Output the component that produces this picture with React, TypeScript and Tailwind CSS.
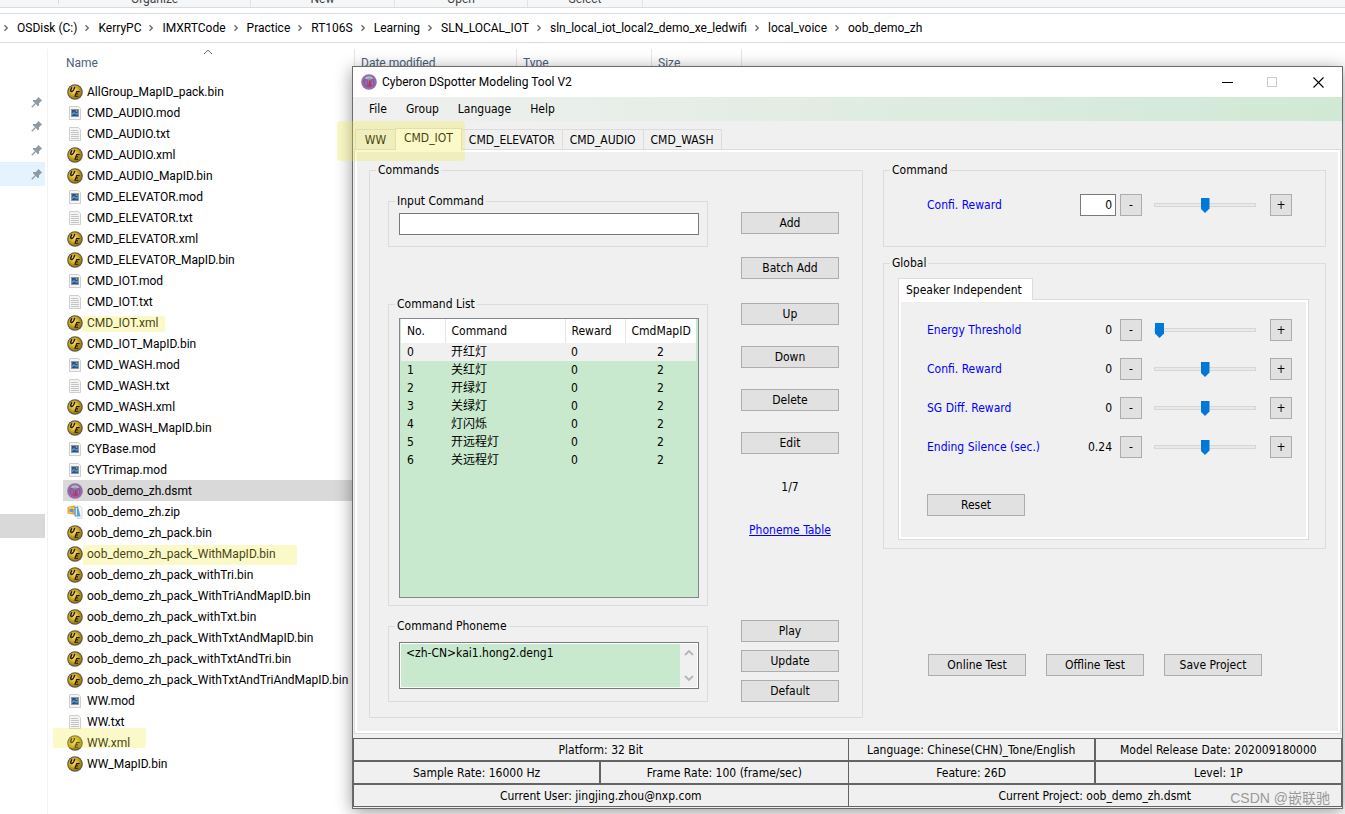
import React, { useState } from "react";

type FileKind = "ue" | "mod" | "txt" | "dsmt" | "zip";

const files: { name: string; kind: FileKind; mark?: string }[] = [
  { name: "AllGroup_MapID_pack.bin", kind: "ue" },
  { name: "CMD_AUDIO.mod", kind: "mod" },
  { name: "CMD_AUDIO.txt", kind: "txt" },
  { name: "CMD_AUDIO.xml", kind: "ue" },
  { name: "CMD_AUDIO_MapID.bin", kind: "ue" },
  { name: "CMD_ELEVATOR.mod", kind: "mod" },
  { name: "CMD_ELEVATOR.txt", kind: "txt" },
  { name: "CMD_ELEVATOR.xml", kind: "ue" },
  { name: "CMD_ELEVATOR_MapID.bin", kind: "ue" },
  { name: "CMD_IOT.mod", kind: "mod" },
  { name: "CMD_IOT.txt", kind: "txt" },
  { name: "CMD_IOT.xml", kind: "ue", mark: "left-4 w-[82px] top-1 h-4" },
  { name: "CMD_IOT_MapID.bin", kind: "ue" },
  { name: "CMD_WASH.mod", kind: "mod" },
  { name: "CMD_WASH.txt", kind: "txt" },
  { name: "CMD_WASH.xml", kind: "ue" },
  { name: "CMD_WASH_MapID.bin", kind: "ue" },
  { name: "CYBase.mod", kind: "mod" },
  { name: "CYTrimap.mod", kind: "mod" },
  { name: "oob_demo_zh.dsmt", kind: "dsmt" },
  { name: "oob_demo_zh.zip", kind: "zip" },
  { name: "oob_demo_zh_pack.bin", kind: "ue" },
  { name: "oob_demo_zh_pack_WithMapID.bin", kind: "ue", mark: "left-4 w-[214px] top-0.5 h-5" },
  { name: "oob_demo_zh_pack_withTri.bin", kind: "ue" },
  { name: "oob_demo_zh_pack_WithTriAndMapID.bin", kind: "ue" },
  { name: "oob_demo_zh_pack_withTxt.bin", kind: "ue" },
  { name: "oob_demo_zh_pack_WithTxtAndMapID.bin", kind: "ue" },
  { name: "oob_demo_zh_pack_withTxtAndTri.bin", kind: "ue" },
  { name: "oob_demo_zh_pack_WithTxtAndTriAndMapID.bin", kind: "ue" },
  { name: "WW.mod", kind: "mod" },
  { name: "WW.txt", kind: "txt" },
  { name: "WW.xml", kind: "ue", mark: "-left-3.5 w-[93px] -top-1 h-5" },
  { name: "WW_MapID.bin", kind: "ue" },
];

const crumbs = [
  "OSDisk (C:)",
  "KerryPC",
  "IMXRTCode",
  "Practice",
  "RT106S",
  "Learning",
  "SLN_LOCAL_IOT",
  "sln_local_iot_local2_demo_xe_ledwifi",
  "local_voice",
  "oob_demo_zh",
];

const commands = ["开红灯", "关红灯", "开绿灯", "关绿灯", "灯闪烁", "开远程灯", "关远程灯"];

const tabs = ["WW", "CMD_IOT", "CMD_ELEVATOR", "CMD_AUDIO", "CMD_WASH"];

const DsmtIcon = () => (
  <svg className="w-4 h-4 shrink-0" viewBox="0 0 16 16">
    <circle cx="8" cy="8" r="7.8" fill="#9a68a6" />
    <circle cx="8" cy="8" r="5.4" fill="#86559a" />
    <path d="M3.6 4.6 Q5 2 8 2.2 Q11 2 12.4 4.6 L10.6 5.2 H5.4z" fill="#a9bcc4" />
    <path d="M6.6 4.5h3l-.4 5h-2z" fill="#8296a4" />
    <path d="M7.6 6.5h1.8l-.2 6.4H8z" fill="#d8263f" />
    <path d="M5 6.4v4.4M11.3 6.4v4.4" stroke="#b583bd" strokeWidth="0.9" />
  </svg>
);

const FileIcon = ({ kind }: { kind: FileKind }) => {
  if (kind === "dsmt") return <DsmtIcon />;
  if (kind === "ue") {
    return (
      <svg className="w-4 h-4 shrink-0" viewBox="0 0 16 16">
        <defs>
          <radialGradient id="gold" cx="0.42" cy="0.4" r="0.62">
            <stop offset="0" stopColor="#f3e08a" />
            <stop offset="0.5" stopColor="#d3ae22" />
            <stop offset="1" stopColor="#8b6e12" />
          </radialGradient>
        </defs>
        <circle cx="8" cy="8" r="7.8" fill="#57554c" />
        <circle cx="8" cy="8" r="6.8" fill="url(#gold)" />
        <path d="M4.8 3.2 L3.7 6.2 Q3.5 7.6 4.7 7.5 Q6 7.4 6.6 6 L7.8 3" fill="none" stroke="#1b1708" strokeWidth="1.3" />
        <path d="M12.6 7.6 H9.6 L8 12.2 H11.2 M8.8 9.9 H11.2" fill="none" stroke="#1b1708" strokeWidth="1.1" />
      </svg>
    );
  }
  if (kind === "zip") {
    return (
      <svg className="w-4 h-4 shrink-0" viewBox="0 0 16 16">
        <path d="M10 2h3l2 2v10.5h-5z" fill="#f4f7fa" stroke="#ccd5dd" strokeWidth="0.8" />
        <path d="M0.5 3 L8.5 1.2 V11 L0.5 9.6z" fill="#f3a32f" />
        <path d="M2 4.2h5M2 8.2h3" stroke="#ffe3a6" strokeWidth="0.9" />
        <circle cx="4.6" cy="6.4" r="1.9" fill="#4c9fd6" />
        <path d="M7.5 3.2 L11 2.6 L13.6 12.4 L7.5 12.6z" fill="#59a5d8" />
        <path d="M9.4 4v7.6" stroke="#d5ebf8" strokeWidth="1.2" />
      </svg>
    );
  }
  return (
    <svg className="w-4 h-4 shrink-0" viewBox="0 0 16 16">
      <path d="M2.5 1.5h9l2 2v11h-11z" fill="#f4f4f4" stroke="#cfcfcf" />
      {kind === "txt" ? (
        <path d="M4 4.5h7M4 6.5h8M4 8.5h8M4 10.5h8M4 12.5h8" stroke="#c0c0c0" strokeWidth="0.9" />
      ) : (
        <>
          <rect x="4.5" y="4.5" width="7" height="7" fill="#2f5480" stroke="#8393a5" strokeWidth="0.8" />
          <path d="M5.2 9.8 Q6.5 6.8 8 8.4 T11 8" stroke="#5e9bd6" strokeWidth="1.3" fill="none" />
          <rect x="8.8" y="5.4" width="1.6" height="1.4" fill="#c9b458" />
        </>
      )}
    </svg>
  );
};

const PinIcon = () => (
  <svg className="w-3 h-3" viewBox="0 0 12 12">
    <path d="M7.2 0.8 L11.2 4.8 L9.8 5.4 L8 7.2 L8 9.6 L7 10.2 L1.8 5 L2.4 4 L4.8 4 L6.6 2.2z" fill="#8d99a3" />
    <path d="M4.6 7.4 L0.8 11.2" stroke="#8d99a3" strokeWidth="1.3" />
  </svg>
);

const Crumb = ({ label }: { label: string }) => (
  <>
    <svg className="w-[21px] h-2 shrink-0" viewBox="0 0 21 8">
      <path d="M8.5 1.2 L11.3 4 L8.5 6.8" fill="none" stroke="#666" strokeWidth="1.3" />
    </svg>
    <a href="#" className="whitespace-nowrap">{label}</a>
  </>
);

const Button = ({ children, className = "" }: { children: React.ReactNode; className?: string }) => (
  <button className={`w-[98px] h-[22px] shrink-0 bg-[#e1e1e1] border border-[#adadad] leading-5 ${className}`}>
    {children}
  </button>
);

const Group = ({ title, className = "", children }: { title: string; className?: string; children: React.ReactNode }) => (
  <fieldset className="min-w-0 border border-[#dcdcdc]">
    <legend className="ml-1.5 px-0.5 leading-4">{title}</legend>
    <div className={className}>{children}</div>
  </fieldset>
);

const SliderRow = ({ id, label, value, max = 100, start, boxed }: {
  id: string;
  label: string;
  value: string;
  max?: number;
  start: number;
  boxed?: boolean;
}) => {
  const [pos, setPos] = useState(start);
  return (
    <div className="flex items-center h-[22px]">
      <label htmlFor={id} className="flex-1 text-[#0000ff] whitespace-nowrap">{label}</label>
      {boxed ? (
        <input
          aria-label={`${label} value`}
          defaultValue={value}
          className="w-9 h-[22px] mr-1 pr-[3px] bg-white border border-[#7a7a7a] text-right"
        />
      ) : (
        <output htmlFor={id} className="mr-2">{value}</output>
      )}
      <button onClick={() => setPos(pos - 1)} className="w-[22px] h-[22px] bg-[#e1e1e1] border border-[#adadad] leading-5">-</button>
      <input
        id={id}
        type="range"
        min={0}
        max={max}
        value={pos}
        onChange={(e) => setPos(Number(e.target.value))}
        className="w-[102px] h-[15px] ml-3 mr-3.5 appearance-none bg-transparent [&::-webkit-slider-runnable-track]:h-1 [&::-webkit-slider-runnable-track]:bg-[#e7eaea] [&::-webkit-slider-runnable-track]:border [&::-webkit-slider-runnable-track]:border-[#d6d6d6] [&::-webkit-slider-thumb]:appearance-none [&::-webkit-slider-thumb]:w-[9px] [&::-webkit-slider-thumb]:h-[15px] [&::-webkit-slider-thumb]:-mt-1.5 [&::-webkit-slider-thumb]:bg-[#0078d7] [&::-webkit-slider-thumb]:[clip-path:polygon(0_0,100%_0,100%_70%,50%_100%,0_70%)]"
      />
      <button onClick={() => setPos(pos + 1)} className="w-[22px] h-[22px] bg-[#e1e1e1] border border-[#adadad] leading-5">+</button>
    </div>
  );
};

const Explorer = () => (
  <div className="flex-1 flex flex-col font-[Roboto,'Noto_Sans',sans-serif] text-xs leading-4 text-black">
    <div className="flex items-end h-2 overflow-hidden bg-[#f5f6f7] border-b border-[#dadbdc] text-center text-[#444]">
      <span className="w-[59px] h-1 mb-[3px] border-r border-[#dadbdc]" />
      <span className="w-[191px]">Organize</span>
      <span className="w-[145px] border-x border-[#e2e3e4]">New</span>
      <span className="w-[133px] border-r border-[#e2e3e4]">Open</span>
      <span className="w-[115px] border-r border-[#e2e3e4]">Select</span>
    </div>
    <nav className="flex items-center h-[30px] mt-[5px] -ml-1 border-y border-[#d9d9d9]">
      {crumbs.map((c) => (
        <Crumb key={c} label={c} />
      ))}
    </nav>
    <div className="flex-1 flex">
      <aside className="w-[48px] shrink-0 border-r border-[#f3f3f3] mt-1.5">
        <div className="pt-[41px] w-[45px]">
          {[0, 1, 2, 3].map((n) => (
            <div key={n} className={`flex items-center justify-end h-6 pr-0.5 ${n === 3 ? "bg-[#e5f3ff]" : ""}`}>
              <PinIcon />
            </div>
          ))}
          <div className="h-6 mt-[328px] bg-[#d9d9d9]" />
        </div>
      </aside>
      <main className="flex-1 min-w-0">
        <div className="flex h-[38px] pt-1.5 text-[#4c607a]">
          <button className="relative w-[307px] shrink-0 pl-[18px] pt-1 text-left border-r border-[#e5e5e5] h-6">
            Name
            <svg className="absolute left-[155px] top-0 w-2.5 h-1.5" viewBox="0 0 10 6">
              <path d="M1 5 L5 1.2 L9 5" fill="none" stroke="#666" />
            </svg>
          </button>
          <span className="w-[162px] pl-1.5 pt-1.5 h-6 border-r border-[#e5e5e5]">Date modified</span>
          <span className="w-[135px] pl-1.5 pt-1.5 h-6 border-r border-[#e5e5e5]">Type</span>
          <span className="w-[90px] pl-1.5 pt-1.5 h-6 border-r border-[#e5e5e5]">Size</span>
        </div>
        <ul className="ml-[15px] w-[678px]">
          {files.map((f) => (
            <li key={f.name} className={`flex items-center h-[21px] pl-1 ${f.kind === "dsmt" ? "bg-[#d9d9d9]" : ""}`}>
              <div className="relative flex items-center gap-1 h-full">
                <FileIcon kind={f.kind} />
                <span className="whitespace-nowrap">{f.name}</span>
                {f.mark && <span className={`absolute bg-[#f5e93c]/28 rounded-xs ${f.mark}`} />}
              </div>
            </li>
          ))}
        </ul>
      </main>
    </div>
  </div>
);

const CommandTable = () => (
  <div className="h-[280px] bg-[#c8e9cd] border border-[#828790] pl-px pr-0.5">
    <table className="w-full table-fixed border-collapse text-left">
      <thead>
        <tr className="h-6 bg-white">
          <th className="w-11 pl-1.5 font-normal border-r border-[#e5e5e5]">No.</th>
          <th className="pl-1.5 font-normal border-r border-[#e5e5e5]">Command</th>
          <th className="w-[60px] pl-1.5 font-normal border-r border-[#e5e5e5]">Reward</th>
          <th className="w-[71px] pl-1.5 font-normal">CmdMapID</th>
        </tr>
      </thead>
      <tbody>
        {commands.map((c, i) => (
          <tr key={c} className={`h-[18px] leading-4 ${i === 0 ? "bg-[#f0f0f0]" : ""}`}>
            <td className="pl-1.5">{i}</td>
            <td className="pl-1.5">{c}</td>
            <td className="pl-1.5">0</td>
            <td className="text-center">2</td>
          </tr>
        ))}
      </tbody>
    </table>
  </div>
);

const CommandsPanel = () => (
  <div className="w-[494px] shrink-0">
    <Group title="Commands" className="flex pl-[18px] pr-[23px] pb-[15px]">
      <div className="flex-1 min-w-0 pt-[15px]">
        <Group title="Input Command" className="pl-2.5 pr-2 pt-1 pb-[11px]">
          <input aria-label="Input Command" className="block w-full h-[22px] px-1 bg-white border border-[#7a7a7a]" />
        </Group>
        <div className="mt-[49px]">
          <Group title="Command List" className="pl-2.5 pr-2 pt-1.5 pb-[7px]">
            <CommandTable />
          </Group>
        </div>
        <div className="mt-3">
          <Group title="Command Phoneme" className="pl-2.5 pr-2 pt-2 pb-3">
            <div className="flex h-[47px] p-px bg-white border border-[#7a7a7a]">
              <textarea
                aria-label="Command Phoneme"
                defaultValue="<zh-CN>kai1.hong2.deng1"
                className="flex-1 min-w-0 resize-none overflow-hidden bg-[#c8e9cd] pl-[5px] leading-[18px]"
              />
              <div className="flex flex-col justify-between items-center w-[17px] py-1 bg-[#f0f0f0]">
                <svg className="w-2.5 h-2.5" viewBox="0 0 10 10">
                  <path d="M1 7 L5 3 L9 7" fill="none" stroke="#b5b5b5" strokeWidth="1.8" />
                </svg>
                <svg className="w-2.5 h-2.5" viewBox="0 0 10 10">
                  <path d="M1 3 L5 7 L9 3" fill="none" stroke="#b5b5b5" strokeWidth="1.8" />
                </svg>
              </div>
            </div>
          </Group>
        </div>
      </div>
      <div className="flex flex-col items-center w-[98px] ml-[33px] pt-[34px]">
        <Button>Add</Button>
        <Button className="mt-[23px]">Batch Add</Button>
        <Button className="mt-6">Up</Button>
        <Button className="mt-[21px]">Down</Button>
        <Button className="mt-[21px]">Delete</Button>
        <Button className="mt-[21px]">Edit</Button>
        <span className="mt-6 leading-[18px]">1/7</span>
        <a href="#" className="mt-[25px] leading-[18px] text-[#0000ff] underline whitespace-nowrap">Phoneme Table</a>
        <div className="flex flex-col gap-2 mt-auto">
          <Button>Play</Button>
          <Button>Update</Button>
          <Button>Default</Button>
        </div>
      </div>
    </Group>
  </div>
);

const SettingsPanel = () => (
  <div className="flex-1 min-w-0">
    <Group title="Command" className="pt-4 pb-[30px] pl-[43px] pr-[33px]">
      <SliderRow id="cmd-reward" label="Confi. Reward" value="0" start={50} boxed />
    </Group>
    <div className="mt-2">
      <Group title="Global" className="pl-3.5 pr-4 pt-[7px] pb-2">
        <button className="relative block h-[22px] -mb-px pl-[7px] pr-2.5 bg-white border border-b-0 border-[#dcdcdc] whitespace-nowrap">
          Speaker Independent
        </button>
        <div className="pt-[19px] pb-[23px] pl-7 pr-4 border border-[#dcdcdc] shadow-[inset_0_0_0_2px_white]">
          <div className="flex flex-col gap-[17px]">
            <SliderRow id="energy" label="Energy Threshold" value="0" start={0} />
            <SliderRow id="confi" label="Confi. Reward" value="0" start={50} />
            <SliderRow id="sgdiff" label="SG Diff. Reward" value="0" start={50} />
            <SliderRow id="silence" label="Ending Silence (sec.)" value="0.24" start={50} />
          </div>
          <Button className="block mt-9">Reset</Button>
        </div>
      </Group>
    </div>
    <div className="flex gap-5 mt-[105px] pl-[45px]">
      <Button>Online Test</Button>
      <Button>Offline Test</Button>
      <Button>Save Project</Button>
    </div>
  </div>
);

const cell = "h-[23px] border border-[#646464] leading-4 text-center whitespace-nowrap";

const StatusTable = () => (
  <table className="w-full mt-1 mb-px table-fixed border-separate border-spacing-0">
    <tbody>
      <tr>
        <td colSpan={2} className={`${cell} border-r-0`}>Platform: 32 Bit</td>
        <td className={cell}>Language: Chinese(CHN)_Tone/English</td>
        <td className={cell}>Model Release Date: 202009180000</td>
      </tr>
      <tr>
        <td className={cell}>Sample Rate: 16000 Hz</td>
        <td className={`${cell} border-r-0`}>Frame Rate: 100 (frame/sec)</td>
        <td className={cell}>Feature: 26D</td>
        <td className={cell}>Level: 1P</td>
      </tr>
      <tr>
        <td colSpan={2} className={`${cell} border-r-0`}>Current User: jingjing.zhou@nxp.com</td>
        <td colSpan={2} className={cell}>Current Project: oob_demo_zh.dsmt</td>
      </tr>
    </tbody>
  </table>
);

const ToolWindow = () => {
  const [active, setActive] = useState("CMD_IOT");

  return (
    <div className="absolute left-[352px] right-0.5 top-[66px] min-w-[960px] bg-[#f0f0f0] border border-[#6b6b6b] shadow-[0_3px_16px_rgba(0,0,0,0.4)] font-['DejaVu_Sans_Condensed',Roboto,'Noto_Sans_CJK_SC',sans-serif] text-xs leading-4 text-black">
      <header className="flex items-center h-[30px] pl-2 bg-white font-[Roboto,'Noto_Sans',sans-serif]">
        <DsmtIcon />
        <h1 className="flex-1 ml-[5px]">Cyberon DSpotter Modeling Tool V2</h1>
        <button aria-label="Minimize" className="flex justify-center w-[45px]">
          <svg className="w-[11px] h-[11px]" viewBox="0 0 11 11"><path d="M0 5.5h11" stroke="#000" /></svg>
        </button>
        <button aria-label="Maximize" disabled className="flex justify-center w-[45px]">
          <svg className="w-[11px] h-[11px]" viewBox="0 0 11 11"><rect x="0.5" y="0.5" width="9" height="9" fill="none" stroke="#ccc" /></svg>
        </button>
        <button aria-label="Close" className="flex justify-center w-[47px]">
          <svg className="w-[11px] h-[11px]" viewBox="0 0 11 11"><path d="M0.5 0.5 L10.5 10.5 M10.5 0.5 L0.5 10.5" stroke="#000" strokeWidth="1.1" /></svg>
        </button>
      </header>
      <nav className="flex items-center gap-[19px] h-6 pl-4 bg-gradient-to-r from-[#f0f0f0] to-[#d0e9d4]">
        <button>File</button>
        <button>Group</button>
        <button>Language</button>
        <button>Help</button>
      </nav>
      <div className="relative flex items-end h-[28px] pl-0.5">
        {tabs.map((t) => (
          <button
            key={t}
            onClick={() => setActive(t)}
            className={`min-w-[41px] border border-b-0 border-[#dcdcdc] whitespace-nowrap ${
              t === active ? "relative h-[22px] -ml-px -mb-px px-2 pb-1 bg-white" : "h-5 px-[7px] -ml-px first:ml-0"
            }`}
          >
            {t}
          </button>
        ))}
        <span className="absolute -left-4 top-0 w-32 h-10 rounded-sm bg-[#f5e93c]/28 pointer-events-none" />
      </div>
      <main className="flex gap-5 mx-px px-3.5 pt-3 pb-[15px] border border-[#dcdcdc] shadow-[inset_0_0_0_2px_white]">
        <CommandsPanel />
        <SettingsPanel />
      </main>
      <StatusTable />
      <span className="absolute right-3 bottom-0 text-sm leading-5 text-[#9a9a9a] font-['Liberation_Sans','Noto_Sans_CJK_SC',sans-serif]">
        CSDN @嵌联驰
      </span>
    </div>
  );
};

export default function App() {
  return (
    <div className="relative flex flex-col min-h-screen overflow-hidden bg-white">
      <Explorer />
      <ToolWindow />
    </div>
  );
}
